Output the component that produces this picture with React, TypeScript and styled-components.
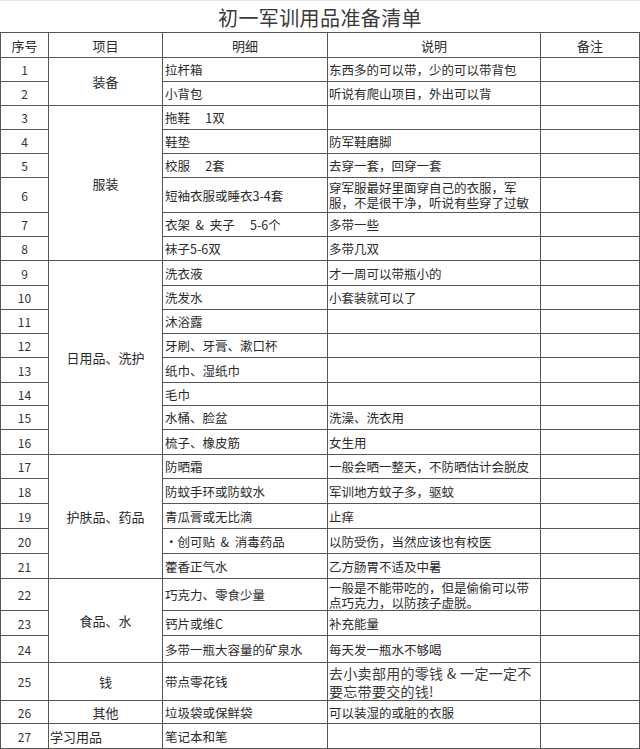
import React from "react";
import styled, { createGlobalStyle } from "styled-components";

type Row = {
  no: number;
  h: number;
  detail: string;
  note?: string;
  big?: boolean;
  cat?: { label: string; span: number; left?: boolean };
};

const HEADER_H = 24;

const rows: Row[] = [
  { no: 1, h: 23, cat: { label: "装备", span: 2 }, detail: "拉杆箱", note: "东西多的可以带，少的可以带背包" },
  { no: 2, h: 23, detail: "小背包", note: "听说有爬山项目，外出可以背" },
  { no: 3, h: 23, cat: { label: "服装", span: 6 }, detail: "拖鞋\u3000 1双" },
  { no: 4, h: 23, detail: "鞋垫", note: "防军鞋磨脚" },
  { no: 5, h: 23, detail: "校服\u3000 2套", note: "去穿一套，回穿一套" },
  {
    no: 6,
    h: 34,
    detail: "短袖衣服或睡衣3-4套",
    note: "穿军服最好里面穿自己的衣服，军\n服，不是很干净，听说有些穿了过敏",
  },
  { no: 7, h: 23, detail: "衣架  &  夹子\u3000 5-6个", note: "多带一些" },
  { no: 8, h: 23, detail: "袜子5-6双", note: "多带几双" },
  { no: 9, h: 24, cat: { label: "日用品、洗护", span: 8 }, detail: "洗衣液", note: "才一周可以带瓶小的" },
  { no: 10, h: 23, detail: "洗发水", note: "小套装就可以了" },
  { no: 11, h: 23, detail: "沐浴露" },
  { no: 12, h: 23, detail: "牙刷、牙膏、漱口杯" },
  { no: 13, h: 24, detail: "纸巾、湿纸巾" },
  { no: 14, h: 22, detail: "毛巾" },
  { no: 15, h: 23, detail: "水桶、脸盆", note: "洗澡、洗衣用" },
  { no: 16, h: 24, detail: "梳子、橡皮筋", note: "女生用" },
  { no: 17, h: 23, cat: { label: "护肤品、药品", span: 5 }, detail: "防晒霜", note: "一般会晒一整天，不防晒估计会脱皮" },
  { no: 18, h: 24, detail: "防蚊手环或防蚊水", note: "军训地方蚊子多，驱蚊" },
  { no: 19, h: 24, detail: "青瓜膏或无比滴", note: "止痒" },
  { no: 20, h: 24, detail: "•创可贴  &  消毒药品", note: "以防受伤，当然应该也有校医" },
  { no: 21, h: 24, detail: "藿香正气水", note: "乙方肠胃不适及中暑" },
  {
    no: 22,
    h: 31,
    cat: { label: "食品、水", span: 3 },
    detail: "巧克力、零食少量",
    note: "一般是不能带吃的，但是偷偷可以带\n点巧克力，以防孩子虚脱。",
  },
  { no: 23, h: 24, detail: "钙片或维C", note: "补充能量" },
  { no: 24, h: 26, detail: "多带一瓶大容量的矿泉水", note: "每天发一瓶水不够喝" },
  {
    no: 25,
    h: 37,
    cat: { label: "钱", span: 1 },
    detail: "带点零花钱",
    note: "去小卖部用的零钱 & 一定一定不\n要忘带要交的钱!",
    big: true,
  },
  { no: 26, h: 22, cat: { label: "其他", span: 1 }, detail: "垃圾袋或保鲜袋", note: "可以装湿的或脏的衣服" },
  { no: 27, h: 24, cat: { label: "学习用品", span: 1, left: true }, detail: "笔记本和笔" },
];

const GlobalStyle = createGlobalStyle`
  html, body {
    margin: 0;
    padding: 0;
    background: #ffffff;
  }
  body {
    font-family: "Noto Sans CJK SC", "Noto Sans", sans-serif;
    color: #222;
  }
`;

const Page = styled.div`
  width: 640px;
  background: #fff;
`;

const Title = styled.div`
  height: 32px;
  box-sizing: border-box;
  border-top: 1px solid #e4e4e4;
  padding-top: 1px;
  display: flex;
  align-items: center;
  justify-content: center;
  font-size: 20px;
  letter-spacing: 0.4px;
  color: #3a3a3a;
`;

const Sheet = styled.div<{ $rows: string }>`
  display: grid;
  grid-template-columns: 47px 113px 164px 212px 98px;
  grid-template-rows: ${(p) => p.$rows};
  gap: 1px;
  padding: 1px;
  background: #575757;
`;

const Cell = styled.div<{ $col: number; $row: number; $span?: number }>`
  grid-column: ${(p) => p.$col};
  grid-row: ${(p) => p.$row} / span ${(p) => p.$span ?? 1};
  background: #fff;
  display: flex;
  align-items: center;
  box-sizing: border-box;
  min-width: 0;
  overflow: hidden;
  font-size: 12.5px;
  line-height: 15px;
  color: #2a2a2a;
  white-space: pre-wrap;
`;

const HeadCell = styled(Cell)`
  justify-content: center;
  font-size: 13px;
`;

const NumCell = styled(Cell)`
  justify-content: center;
  font-size: 12px;
  color: #333;
`;

const CatCell = styled(Cell)<{ $left?: boolean }>`
  justify-content: ${(p) => (p.$left ? "flex-start" : "center")};
  padding: ${(p) => (p.$left ? "0 0 0 1px" : "0")};
  font-size: 13px;
`;

const DetailCell = styled(Cell)`
  padding: 0 2px;
`;

const NoteCell = styled(Cell)<{ $big?: boolean }>`
  padding: 0 1px;
  font-size: ${(p) => (p.$big ? "14px" : "12.5px")};
  line-height: ${(p) => (p.$big ? "18px" : "15px")};
  color: ${(p) => (p.$big ? "#3a3a3a" : "#2a2a2a")};
  letter-spacing: ${(p) => (p.$big ? "0.3px" : "0")};
`;

const BlankCell = styled(Cell)``;

const headers = ["序号", "项目", "明细", "说明", "备注"];

export default function App() {
  const template = [HEADER_H, ...rows.map((r) => r.h)].map((h) => `${h}px`).join(" ");

  return (
    <Page>
      <GlobalStyle />
      <Title>初一军训用品准备清单</Title>
      <Sheet $rows={template}>
        {headers.map((h, i) => (
          <HeadCell key={h} $col={i + 1} $row={1}>
            {h}
          </HeadCell>
        ))}
        {rows.map((r, i) => {
          const row = i + 2;
          return (
            <React.Fragment key={r.no}>
              <NumCell $col={1} $row={row}>
                {r.no}
              </NumCell>
              {r.cat && (
                <CatCell $col={2} $row={row} $span={r.cat.span} $left={r.cat.left}>
                  {r.cat.label}
                </CatCell>
              )}
              <DetailCell $col={3} $row={row}>
                {r.detail}
              </DetailCell>
              <NoteCell $col={4} $row={row} $big={r.big}>
                {r.note ?? ""}
              </NoteCell>
              <BlankCell $col={5} $row={row} />
            </React.Fragment>
          );
        })}
      </Sheet>
    </Page>
  );
}
